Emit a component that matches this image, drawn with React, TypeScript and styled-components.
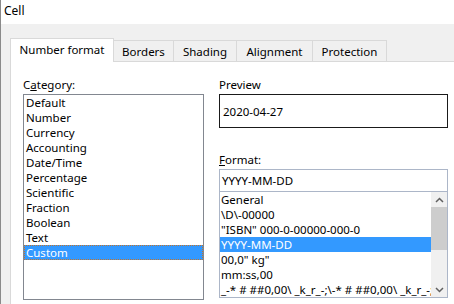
import React from 'react';
import styled, { createGlobalStyle } from 'styled-components';

const Global = createGlobalStyle`
  html, body { margin: 0; padding: 0; background: #fff; }
  body {
    font-family: "Noto Sans", "Liberation Sans", sans-serif;
    font-size: 11.5px;
    color: #000;
  }
  * { box-sizing: border-box; }
`;

const Window = styled.div`
  width: 454px;
  height: 304px;
  overflow: hidden;
  display: flex;
  flex-direction: column;
  border-left: 1px solid #8a8a8a;
`;

const TitleBar = styled.div`
  flex: none;
  height: 24px;
  line-height: 22px;
  padding-left: 3px;
  font-size: 12px;
  background: #fff;
`;

const Body = styled.div`
  flex: 1;
  min-height: 0;
  display: flex;
  flex-direction: column;
  background: #f0f0f0;
  padding: 14px 0 0 9px;
`;

const TabList = styled.div`
  flex: none;
  display: flex;
  align-items: flex-end;
  height: 23px;
  position: relative;
  z-index: 1;
`;

const Tab = styled.div<{ $w: number; $active?: boolean }>`
  width: ${(p) => p.$w}px;
  height: ${(p) => (p.$active ? 24 : 21)}px;
  margin-bottom: ${(p) => (p.$active ? -1 : 0)}px;
  margin-left: -1px;
  &:first-child { margin-left: 0; }
  border: 1px solid #d9d9d9;
  border-bottom: none;
  background: ${(p) => (p.$active ? '#fff' : '#f0f0f0')};
  text-align: center;
  line-height: ${(p) => (p.$active ? 21 : 21)}px;
  white-space: nowrap;
  position: relative;
  z-index: ${(p) => (p.$active ? 2 : 1)};
`;

const Panel = styled.div`
  flex: 1;
  display: flex;
  gap: 15px;
  background: #fff;
  border-top: 1px solid #d9d9d9;
  border-left: 1px solid #d9d9d9;
  padding: 15px 0 0 12px;
`;

const Column = styled.div<{ $w: number }>`
  width: ${(p) => p.$w}px;
  flex: none;
  display: flex;
  flex-direction: column;
`;

const Label = styled.div<{ $gap?: number }>`
  height: 15px;
  line-height: 15px;
  margin-top: ${(p) => p.$gap ?? 0}px;
  margin-bottom: 2px;
  u { text-decoration: underline; text-underline-offset: 1px; }
`;

const ListBox = styled.div`
  height: 206px;
  border: 1px solid #828790;
  overflow: hidden;
`;

const Item = styled.div<{ $selected?: boolean; $focus?: boolean; $pad: number }>`
  height: 15px;
  line-height: 15px;
  padding-left: ${(p) => p.$pad}px;
  white-space: nowrap;
  overflow: hidden;
  background: ${(p) => (p.$selected ? '#3399ff' : 'transparent')};
  color: ${(p) => (p.$selected ? '#fff' : '#000')};
  outline: ${(p) => (p.$focus ? '1px dotted #c4742a' : 'none')};
  outline-offset: -1px;
`;

const PreviewBox = styled.div`
  height: 34px;
  border: 1px solid #1a1a1a;
  display: flex;
  align-items: center;
  padding-left: 3px;
`;

const Input = styled.div`
  height: 23px;
  border: 1px solid #acb6c8;
  display: flex;
  align-items: center;
  padding-left: 2px;
`;

const FormatList = styled.div`
  height: 107px;
  margin-top: -1px;
  border: 1px solid #acb6c8;
  display: flex;
  overflow: hidden;
`;

const FormatItems = styled.div`
  flex: 1;
  min-width: 0;
  overflow: hidden;
`;

const ScrollBar = styled.div`
  flex: none;
  width: 16px;
  display: flex;
  flex-direction: column;
  background: #f0f0f0;
`;

const ScrollButton = styled.div`
  flex: none;
  height: 15px;
  display: flex;
  align-items: center;
  justify-content: center;
`;

const Thumb = styled.div`
  flex: none;
  height: 43px;
  background: #cdcdcd;
`;

const Track = styled.div`
  flex: 1;
`;

const Chevron = ({ up }: { up?: boolean }) => (
  <svg width="9" height="6" viewBox="0 0 9 6">
    <path
      d={up ? 'M1 5 L4.5 1.5 L8 5' : 'M1 1 L4.5 4.5 L8 1'}
      fill="none"
      stroke="#606060"
      strokeWidth="1.5"
    />
  </svg>
);

const tabs = [
  { label: 'Number format', w: 104, active: true },
  { label: 'Borders', w: 61 },
  { label: 'Shading', w: 64 },
  { label: 'Alignment', w: 77 },
  { label: 'Protection', w: 75 },
];

const categories = [
  'Default',
  'Number',
  'Currency',
  'Accounting',
  'Date/Time',
  'Percentage',
  'Scientific',
  'Fraction',
  'Boolean',
  'Text',
  'Custom',
];

const formats = [
  'General',
  '\\D\\-00000',
  '"ISBN" 000-0-00000-000-0',
  'YYYY-MM-DD',
  '00,0" kg"',
  'mm:ss,00',
  '_-* # ##0,00\\ _k_r_-;\\-* # ##0,00\\ _k_r_-;\\-* "-"??\\ _k_r_-;_-@_-',
];

export default function App() {
  return (
    <>
      <Global />
      <Window>
        <TitleBar>Cell</TitleBar>
        <Body>
          <TabList>
            {tabs.map((t) => (
              <Tab key={t.label} $w={t.w} $active={t.active}>
                {t.label}
              </Tab>
            ))}
          </TabList>
          <Panel>
            <Column $w={181}>
              <Label>
                C<u>a</u>tegory:
              </Label>
              <ListBox>
                {categories.map((c) => (
                  <Item
                    key={c}
                    $pad={2}
                    $selected={c === 'Custom'}
                    $focus={c === 'Custom'}
                  >
                    {c}
                  </Item>
                ))}
              </ListBox>
            </Column>
            <Column $w={229}>
              <Label>Preview</Label>
              <PreviewBox>2020-04-27</PreviewBox>
              <Label $gap={24}>
                <u>F</u>ormat:
              </Label>
              <Input>YYYY-MM-DD</Input>
              <FormatList>
                <FormatItems>
                  {formats.map((f) => (
                    <Item key={f} $pad={1} $selected={f === 'YYYY-MM-DD'}>
                      {f}
                    </Item>
                  ))}
                </FormatItems>
                <ScrollBar>
                  <ScrollButton>
                    <Chevron up />
                  </ScrollButton>
                  <Thumb />
                  <Track />
                  <ScrollButton>
                    <Chevron />
                  </ScrollButton>
                </ScrollBar>
              </FormatList>
            </Column>
          </Panel>
        </Body>
      </Window>
    </>
  );
}
